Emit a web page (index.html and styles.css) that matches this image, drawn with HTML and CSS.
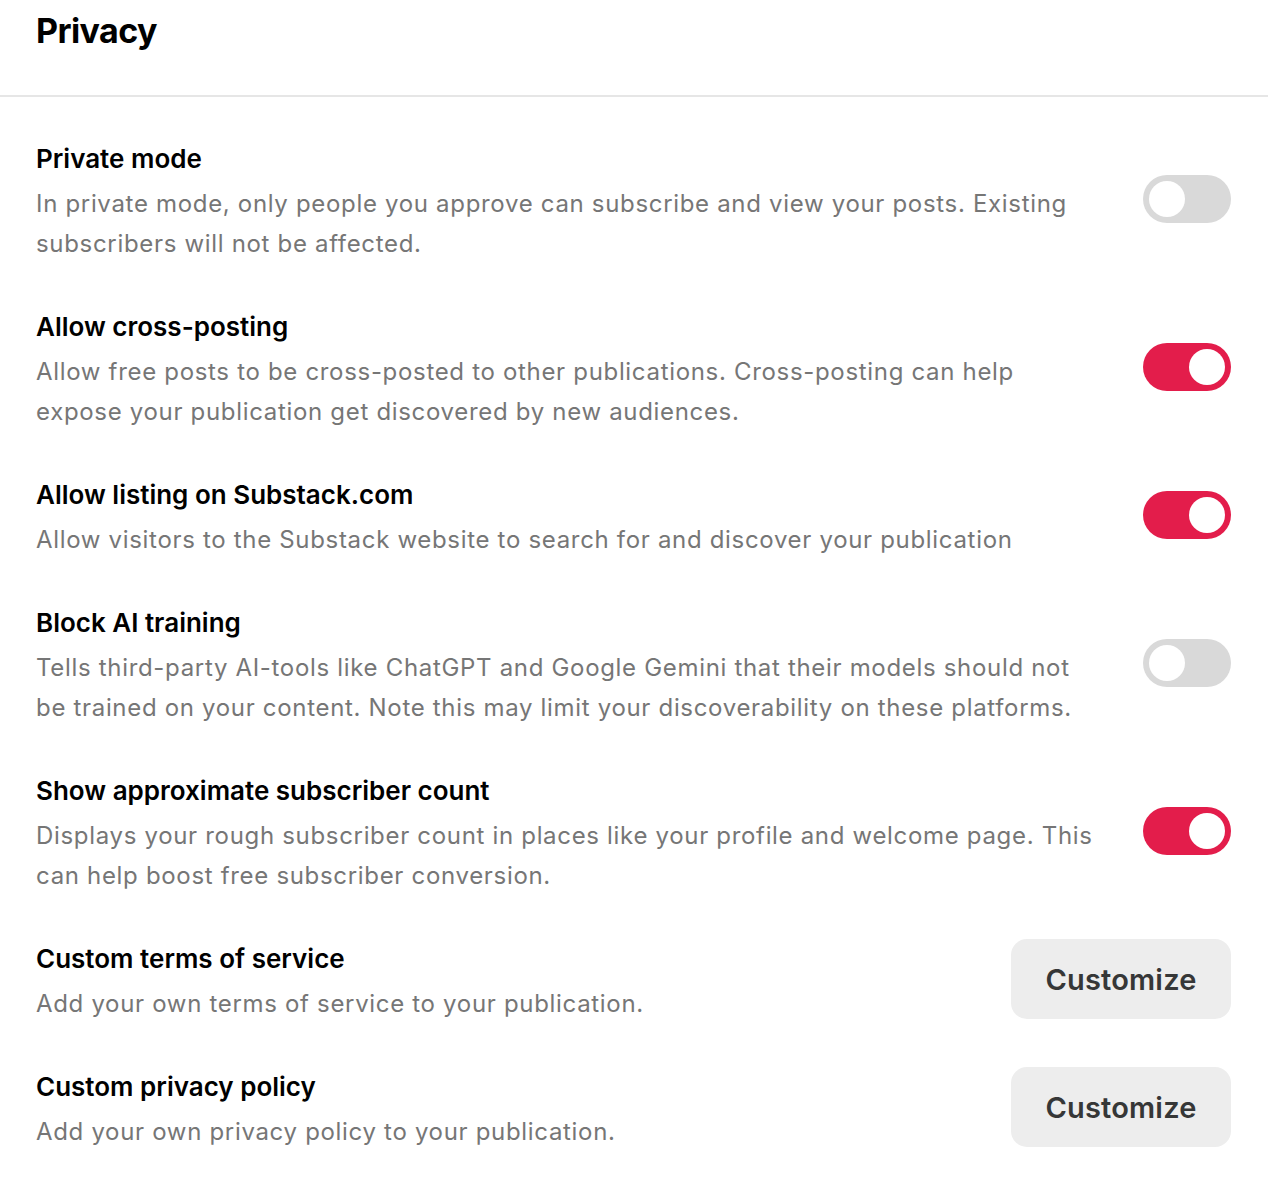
FILE: index.html
```html
<!DOCTYPE html>
<html lang="en">
<head>
<meta charset="utf-8">
<title>Privacy</title>
<link rel="stylesheet" href="styles.css">
</head>
<body>
<header class="page-header">
  <h1 class="page-title">Privacy</h1>
</header>
<main class="settings">
  <section class="setting">
    <div class="setting-text">
      <h2 class="setting-title">Private mode</h2>
      <p class="setting-desc">In private mode, only people you approve can subscribe and view your posts. Existing subscribers will not be affected.</p>
    </div>
    <button class="toggle" aria-pressed="false"><span class="knob"></span></button>
  </section>
  <section class="setting">
    <div class="setting-text">
      <h2 class="setting-title">Allow cross-posting</h2>
      <p class="setting-desc">Allow free posts to be cross-posted to other publications. Cross-posting can help expose your publication get discovered by new audiences.</p>
    </div>
    <button class="toggle on" aria-pressed="true"><span class="knob"></span></button>
  </section>
  <section class="setting">
    <div class="setting-text">
      <h2 class="setting-title">Allow listing on Substack.com</h2>
      <p class="setting-desc">Allow visitors to the Substack website to search for and discover your publication</p>
    </div>
    <button class="toggle on" aria-pressed="true"><span class="knob"></span></button>
  </section>
  <section class="setting">
    <div class="setting-text">
      <h2 class="setting-title">Block AI training</h2>
      <p class="setting-desc">Tells third-party AI-tools like ChatGPT and Google Gemini that their models should not be trained on your content. Note this may limit your discoverability on these platforms.</p>
    </div>
    <button class="toggle" aria-pressed="false"><span class="knob"></span></button>
  </section>
  <section class="setting">
    <div class="setting-text">
      <h2 class="setting-title">Show approximate subscriber count</h2>
      <p class="setting-desc">Displays your rough subscriber count in places like your profile and welcome page. This can help boost free subscriber conversion.</p>
    </div>
    <button class="toggle on" aria-pressed="true"><span class="knob"></span></button>
  </section>
  <section class="setting">
    <div class="setting-text">
      <h2 class="setting-title">Custom terms of service</h2>
      <p class="setting-desc">Add your own terms of service to your publication.</p>
    </div>
    <button class="btn">Customize</button>
  </section>
  <section class="setting">
    <div class="setting-text">
      <h2 class="setting-title">Custom privacy policy</h2>
      <p class="setting-desc">Add your own privacy policy to your publication.</p>
    </div>
    <button class="btn">Customize</button>
  </section>
</main>
</body>
</html>
```

FILE: styles.css
```css
* {
  box-sizing: border-box;
}

html, body {
  margin: 0;
  padding: 0;
  background: #ffffff;
}

body {
  font-family: Inter, "Noto Sans", "Liberation Sans", sans-serif;
  color: #000000;
}

.page-header {
  padding: 9px 36px 42px;
  border-bottom: 2px solid #e6e6e6;
}

.page-title {
  margin: 0;
  font-size: 34px;
  line-height: 44px;
  font-weight: 700;
  letter-spacing: -0.6px;
  color: #000;
}

.settings {
  display: flex;
  flex-direction: column;
  gap: 38px;
  padding: 37px 37px 40px 36px;
}

.setting {
  display: flex;
  align-items: center;
  gap: 40px;
}

.setting-text {
  flex: 1;
  min-width: 0;
}

.setting-title {
  margin: 0;
  font-size: 26px;
  line-height: 50px;
  font-weight: 600;
  color: #000;
}

.setting-desc {
  margin: 0;
  font-size: 24px;
  line-height: 40px;
  font-weight: 400;
  letter-spacing: 0.68px;
  color: #767676;
}

.toggle {
  flex: none;
  width: 88px;
  height: 48px;
  border: none;
  border-radius: 24px;
  background: #d9d9d9;
  padding: 6px;
  display: flex;
  justify-content: flex-start;
  cursor: pointer;
}

.toggle.on {
  background: #e31d4b;
  justify-content: flex-end;
}

.knob {
  width: 36px;
  height: 36px;
  border-radius: 50%;
  background: #ffffff;
}

.btn {
  flex: none;
  width: 220px;
  height: 80px;
  border: none;
  border-radius: 16px;
  background: #ededed;
  color: #363737;
  font-family: Inter, "Noto Sans", "Liberation Sans", sans-serif;
  font-size: 29px;
  font-weight: 600;
  letter-spacing: 0.2px;
  cursor: pointer;
}
```
